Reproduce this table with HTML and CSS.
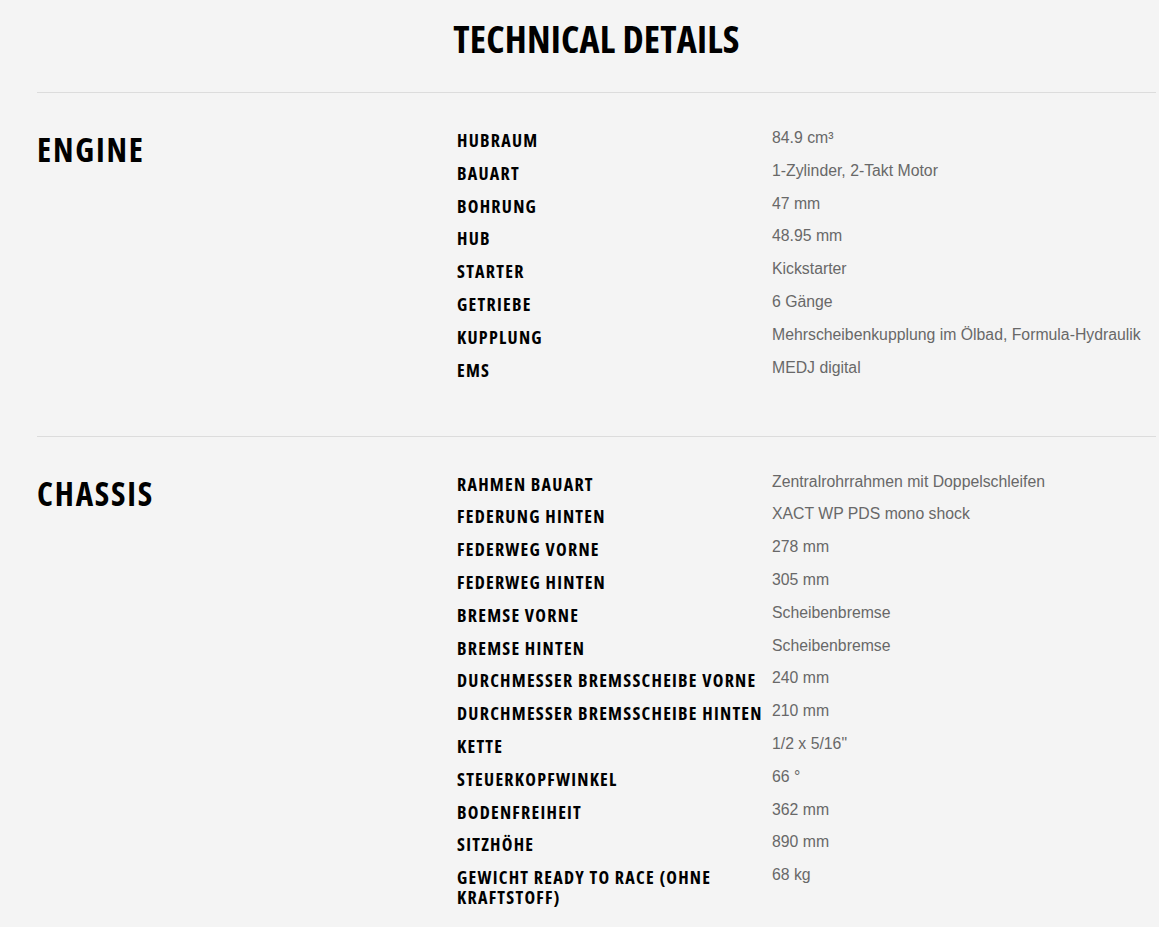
FILE: index.html
```html
<!DOCTYPE html>
<html lang="de">
<head>
<meta charset="utf-8">
<title>Technical Details</title>
<link rel="stylesheet" href="styles.css">
</head>
<body>
<main class="specs">
  <h1 class="specs-title">TECHNICAL DETAILS</h1>

  <section class="group">
    <h2 class="group-title">ENGINE</h2>
    <dl class="rows">
      <div class="row"><dt>HUBRAUM</dt><dd>84.9 cm³</dd></div>
      <div class="row"><dt>BAUART</dt><dd>1-Zylinder, 2-Takt Motor</dd></div>
      <div class="row"><dt>BOHRUNG</dt><dd>47 mm</dd></div>
      <div class="row"><dt>HUB</dt><dd>48.95 mm</dd></div>
      <div class="row"><dt>STARTER</dt><dd>Kickstarter</dd></div>
      <div class="row"><dt>GETRIEBE</dt><dd>6 Gänge</dd></div>
      <div class="row"><dt>KUPPLUNG</dt><dd>Mehrscheibenkupplung im Ölbad, Formula-Hydraulik</dd></div>
      <div class="row"><dt>EMS</dt><dd>MEDJ digital</dd></div>
    </dl>
  </section>

  <section class="group">
    <h2 class="group-title">CHASSIS</h2>
    <dl class="rows">
      <div class="row"><dt>RAHMEN BAUART</dt><dd>Zentralrohrrahmen mit Doppelschleifen</dd></div>
      <div class="row"><dt>FEDERUNG HINTEN</dt><dd>XACT WP PDS mono shock</dd></div>
      <div class="row"><dt>FEDERWEG VORNE</dt><dd>278 mm</dd></div>
      <div class="row"><dt>FEDERWEG HINTEN</dt><dd>305 mm</dd></div>
      <div class="row"><dt>BREMSE VORNE</dt><dd>Scheibenbremse</dd></div>
      <div class="row"><dt>BREMSE HINTEN</dt><dd>Scheibenbremse</dd></div>
      <div class="row"><dt>DURCHMESSER BREMSSCHEIBE VORNE</dt><dd>240 mm</dd></div>
      <div class="row"><dt>DURCHMESSER BREMSSCHEIBE HINTEN</dt><dd>210 mm</dd></div>
      <div class="row"><dt>KETTE</dt><dd>1/2 x 5/16"</dd></div>
      <div class="row"><dt>STEUERKOPFWINKEL</dt><dd>66 °</dd></div>
      <div class="row"><dt>BODENFREIHEIT</dt><dd>362 mm</dd></div>
      <div class="row"><dt>SITZHÖHE</dt><dd>890 mm</dd></div>
      <div class="row"><dt>GEWICHT READY TO RACE (OHNE KRAFTSTOFF)</dt><dd>68 kg</dd></div>
    </dl>
  </section>
</main>
</body>
</html>
```

FILE: styles.css
```css
html, body {
  margin: 0;
  padding: 0;
  background: #f4f4f4;
}

body {
  font-family: "Liberation Sans", Arial, sans-serif;
  color: #000;
}

.specs {
  margin: 0 3px 0 37px;
}

.specs-title {
  margin: 0;
  padding: 15px 0 31px;
  text-align: center;
  font-family: "Open Sans", sans-serif;
  font-stretch: 75%;
  font-weight: 700;
  font-size: 38px;
  line-height: 46px;
  letter-spacing: 0.2px;
  border-bottom: 1px solid #dcdcdc;
}

.group {
  display: grid;
  grid-template-columns: 420px 1fr;
  padding: 37px 0 56px;
  border-bottom: 1px solid #dcdcdc;
}

.group:last-child {
  border-bottom: none;
}

.group-title {
  margin: 0;
  font-family: "Open Sans", sans-serif;
  font-stretch: 75%;
  font-weight: 700;
  font-size: 33px;
  line-height: 40px;
  letter-spacing: 1.8px;
}

.rows {
  margin: 0;
  display: flex;
  flex-direction: column;
  gap: 12.8px;
}

.row {
  display: grid;
  grid-template-columns: 315px 1fr;
}

.row dt {
  font-family: "Open Sans", sans-serif;
  font-stretch: 75%;
  font-weight: 700;
  font-size: 18px;
  line-height: 20px;
  letter-spacing: 1.25px;
}

.row dd {
  margin: 0;
  font-size: 15.8px;
  line-height: 16px;
  color: #686868;
}
```
